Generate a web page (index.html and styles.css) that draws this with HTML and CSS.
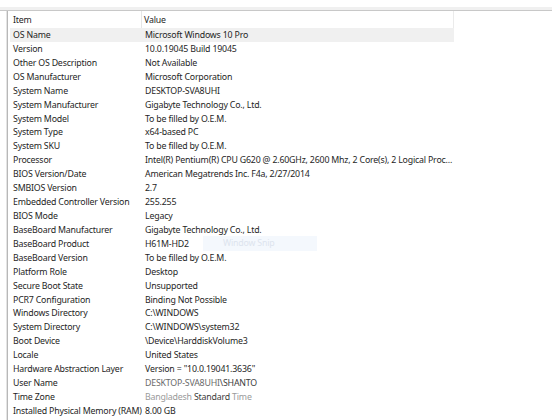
FILE: index.html
```html
<!DOCTYPE html>
<html>
<head>
<meta charset="utf-8">
<link rel="stylesheet" href="styles.css">
</head>
<body>
<div class="app">
  <div class="strip"></div>
  <div class="pane">
    <div class="inner">
      <div class="list">
        <div class="header">
          <div class="hcell">Item</div>
          <div class="hcell">Value</div>
        </div>
        <div class="row selected"><div class="c">OS Name</div><div class="c">Microsoft Windows 10 Pro</div></div>
        <div class="row"><div class="c">Version</div><div class="c">10.0.19045 Build 19045</div></div>
        <div class="row"><div class="c">Other OS Description</div><div class="c">Not Available</div></div>
        <div class="row"><div class="c">OS Manufacturer</div><div class="c">Microsoft Corporation</div></div>
        <div class="row"><div class="c">System Name</div><div class="c">DESKTOP-SVA8UHI</div></div>
        <div class="row"><div class="c">System Manufacturer</div><div class="c">Gigabyte Technology Co., Ltd.</div></div>
        <div class="row"><div class="c">System Model</div><div class="c">To be filled by O.E.M.</div></div>
        <div class="row"><div class="c">System Type</div><div class="c">x64-based PC</div></div>
        <div class="row"><div class="c">System SKU</div><div class="c">To be filled by O.E.M.</div></div>
        <div class="row"><div class="c">Processor</div><div class="c">Intel(R) Pentium(R) CPU G620 @ 2.60GHz, 2600 Mhz, 2 Core(s), 2 Logical Proc...</div></div>
        <div class="row"><div class="c">BIOS Version/Date</div><div class="c">American Megatrends Inc. F4a, 2/27/2014</div></div>
        <div class="row"><div class="c">SMBIOS Version</div><div class="c">2.7</div></div>
        <div class="row"><div class="c">Embedded Controller Version</div><div class="c">255.255</div></div>
        <div class="row"><div class="c">BIOS Mode</div><div class="c">Legacy</div></div>
        <div class="row"><div class="c">BaseBoard Manufacturer</div><div class="c">Gigabyte Technology Co., Ltd.</div></div>
        <div class="row"><div class="c">BaseBoard Product</div><div class="c">H61M-HD2</div></div>
        <div class="row"><div class="c">BaseBoard Version</div><div class="c">To be filled by O.E.M.</div></div>
        <div class="row"><div class="c">Platform Role</div><div class="c">Desktop</div></div>
        <div class="row"><div class="c">Secure Boot State</div><div class="c">Unsupported</div></div>
        <div class="row"><div class="c">PCR7 Configuration</div><div class="c">Binding Not Possible</div></div>
        <div class="row"><div class="c">Windows Directory</div><div class="c">C:\WINDOWS</div></div>
        <div class="row"><div class="c">System Directory</div><div class="c">C:\WINDOWS\system32</div></div>
        <div class="row"><div class="c">Boot Device</div><div class="c">\Device\HarddiskVolume3</div></div>
        <div class="row"><div class="c">Locale</div><div class="c">United States</div></div>
        <div class="row"><div class="c">Hardware Abstraction Layer</div><div class="c">Version = "10.0.19041.3636"</div></div>
        <div class="row"><div class="c">User Name</div><div class="c"><span class="fade1">DESKTOP-SVA8UHI</span><span class="fade0">\SHANTO</span></div></div>
        <div class="row"><div class="c">Time Zone</div><div class="c"><span class="fade2">Bangladesh</span><span class="fade0"> Standard </span><span class="fade2">Time</span></div></div>
        <div class="row"><div class="c">Installed Physical Memory (RAM)</div><div class="c">8.00 GB</div></div>
      </div>
    </div>
  </div>
  <div class="snip">Window Snip</div>
</div>
</body>
</html>
```
FILE: styles.css
```css
html, body {
  margin: 0;
  padding: 0;
  background: #ffffff;
}
body {
  font-family: "Noto Sans", "Open Sans", sans-serif;
  font-size: 8.8px;
  letter-spacing: -0.19px;
  color: #1e1e1e;
  overflow: hidden;
  height: 420px;
}
.app {
  position: relative;
  padding-top: 7px;
  height: 413px;
}
.strip {
  height: 3px;
  background: #f0f0f0;
  border-bottom: 1px solid #c8c8c8;
}
.pane {
  margin-left: 6px;
  border-left: 1px solid #e4e4e4;
  height: 409px;
}
.inner {
  border-left: 1px solid #b8b8b8;
  height: 100%;
  padding-left: 2px;
}
.list {
  width: 444px;
}
.header {
  display: grid;
  grid-template-columns: 132px 312px;
  height: 17px;
}
.hcell {
  box-sizing: border-box;
  padding-left: 3px;
  padding-top: 2px;
  line-height: 15px;
  height: 17px;
}
.hcell:first-child {
  border-right: 1px solid #e6e6e6;
}
.hcell:last-child {
  padding-left: 2px;
  border-right: 1px solid #ebebeb;
}
.row {
  display: grid;
  grid-template-columns: 132px 312px;
  height: 13.93px;
}
.row.selected {
  background: #f0f0f0;
}
.c {
  box-sizing: border-box;
  height: 13.93px;
  padding-left: 3px;
  padding-top: 1px;
  line-height: 12.93px;
  white-space: nowrap;
  overflow: hidden;
}
.fade0 { color: #3c3c3c; }
.fade1 { color: #6a6a6a; }
.fade2 { color: #9a9a9a; }
.snip {
  position: absolute;
  left: 203px;
  top: 236px;
  width: 94px;
  height: 15px;
  padding-left: 20px;
  line-height: 15px;
  background: #f4f8fd;
  color: #dde4ee;
  font-size: 8.8px;
}
```
